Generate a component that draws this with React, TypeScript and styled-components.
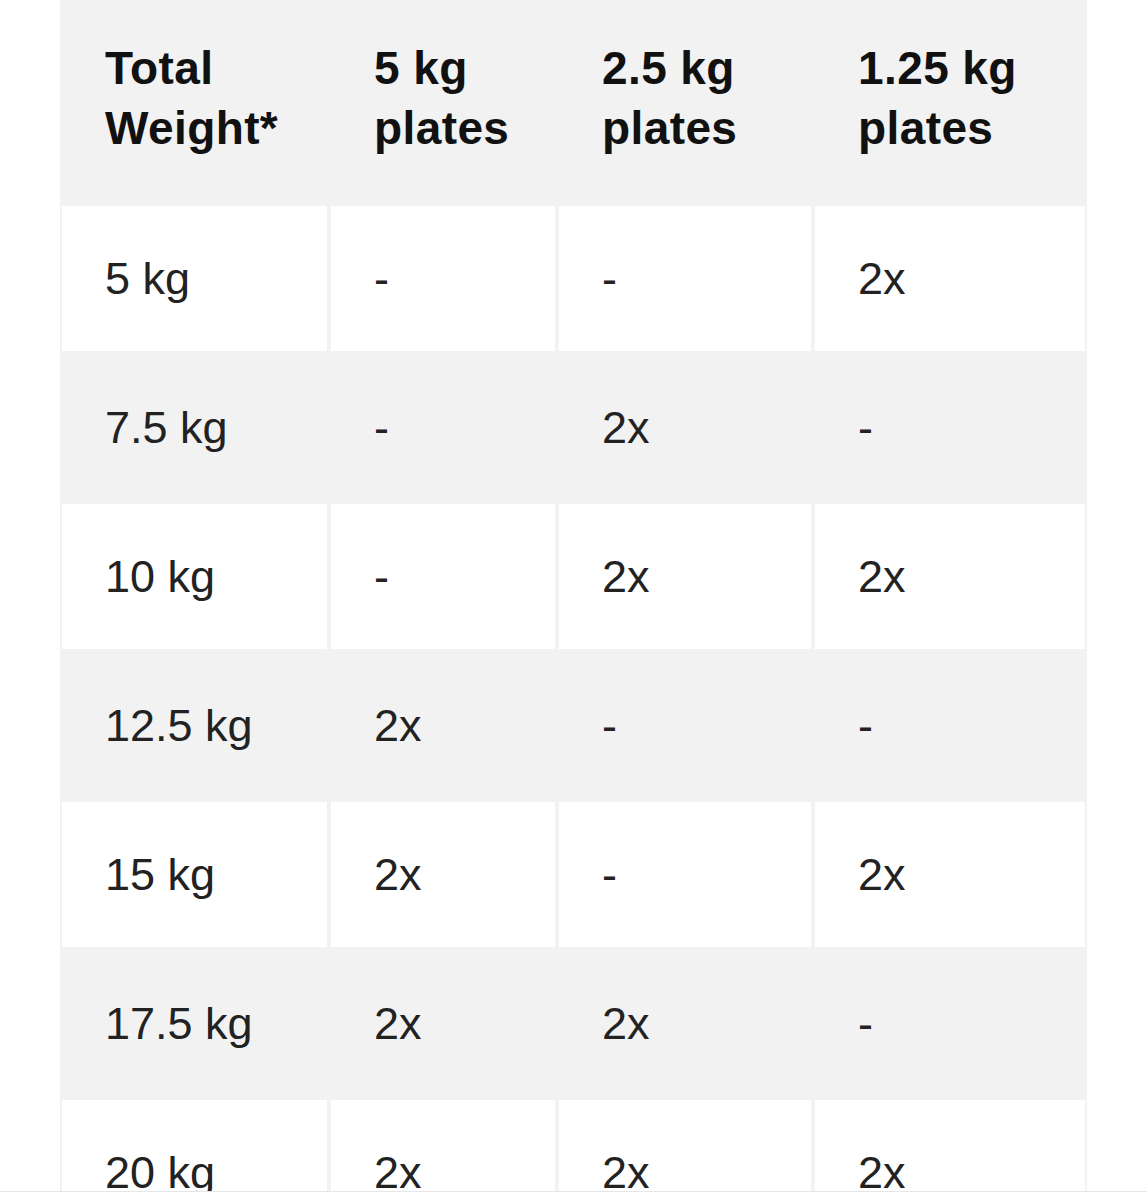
import React from 'react';
import styled, { createGlobalStyle } from 'styled-components';

const GlobalStyle = createGlobalStyle`
  html, body {
    margin: 0;
    padding: 0;
    background: #ffffff;
  }
  body {
    font-family: "Liberation Sans", Arial, Helvetica, sans-serif;
    -webkit-font-smoothing: antialiased;
  }
`;

const cellGap = 4;
const columns = [265, 224, 252, 270];

const Viewport = styled.div`
  height: 1191px;
  overflow: hidden;
  border-bottom: 1px solid #e6e6e6;
`;

const Table = styled.div`
  background-color: #f2f2f2;
  box-sizing: border-box;
  column-gap: ${cellGap}px;
  display: grid;
  grid-template-columns: ${columns.map((c) => `${c}px`).join(' ')};
  margin-left: 60px;
  padding: 0 2px;
  row-gap: ${cellGap}px;
  width: 1027px;
`;

const HeadCell = styled.div`
  box-sizing: border-box;
  color: #111111;
  font-size: 46px;
  font-weight: 700;
  height: 202px;
  letter-spacing: 0.4px;
  line-height: 60px;
  padding: 38px 20px 0 43px;
`;

const Cell = styled.div<{ $shaded: boolean }>`
  align-items: center;
  background-color: ${({ $shaded }) => ($shaded ? '#f2f2f2' : '#ffffff')};
  box-sizing: border-box;
  color: #222222;
  display: flex;
  font-size: 45px;
  height: 145px;
  padding-left: 43px;
`;

const headers = [
  ['Total', 'Weight*'],
  ['5 kg', 'plates'],
  ['2.5 kg', 'plates'],
  ['1.25 kg', 'plates'],
];

const rows = [
  ['5 kg', '-', '-', '2x'],
  ['7.5 kg', '-', '2x', '-'],
  ['10 kg', '-', '2x', '2x'],
  ['12.5 kg', '2x', '-', '-'],
  ['15 kg', '2x', '-', '2x'],
  ['17.5 kg', '2x', '2x', '-'],
  ['20 kg', '2x', '2x', '2x'],
];

const App = () => (
  <>
    <GlobalStyle />
    <Viewport>
      <Table role='table'>
        {headers.map(([top, bottom]) => (
          <HeadCell role='columnheader' key={top}>
            {top}
            <br />
            {bottom}
          </HeadCell>
        ))}
        {rows.map((row, i) =>
          row.map((value, j) => (
            <Cell role='cell' key={`${i}-${j}`} $shaded={i % 2 === 1}>
              {value}
            </Cell>
          ))
        )}
      </Table>
    </Viewport>
  </>
);

export default App;
